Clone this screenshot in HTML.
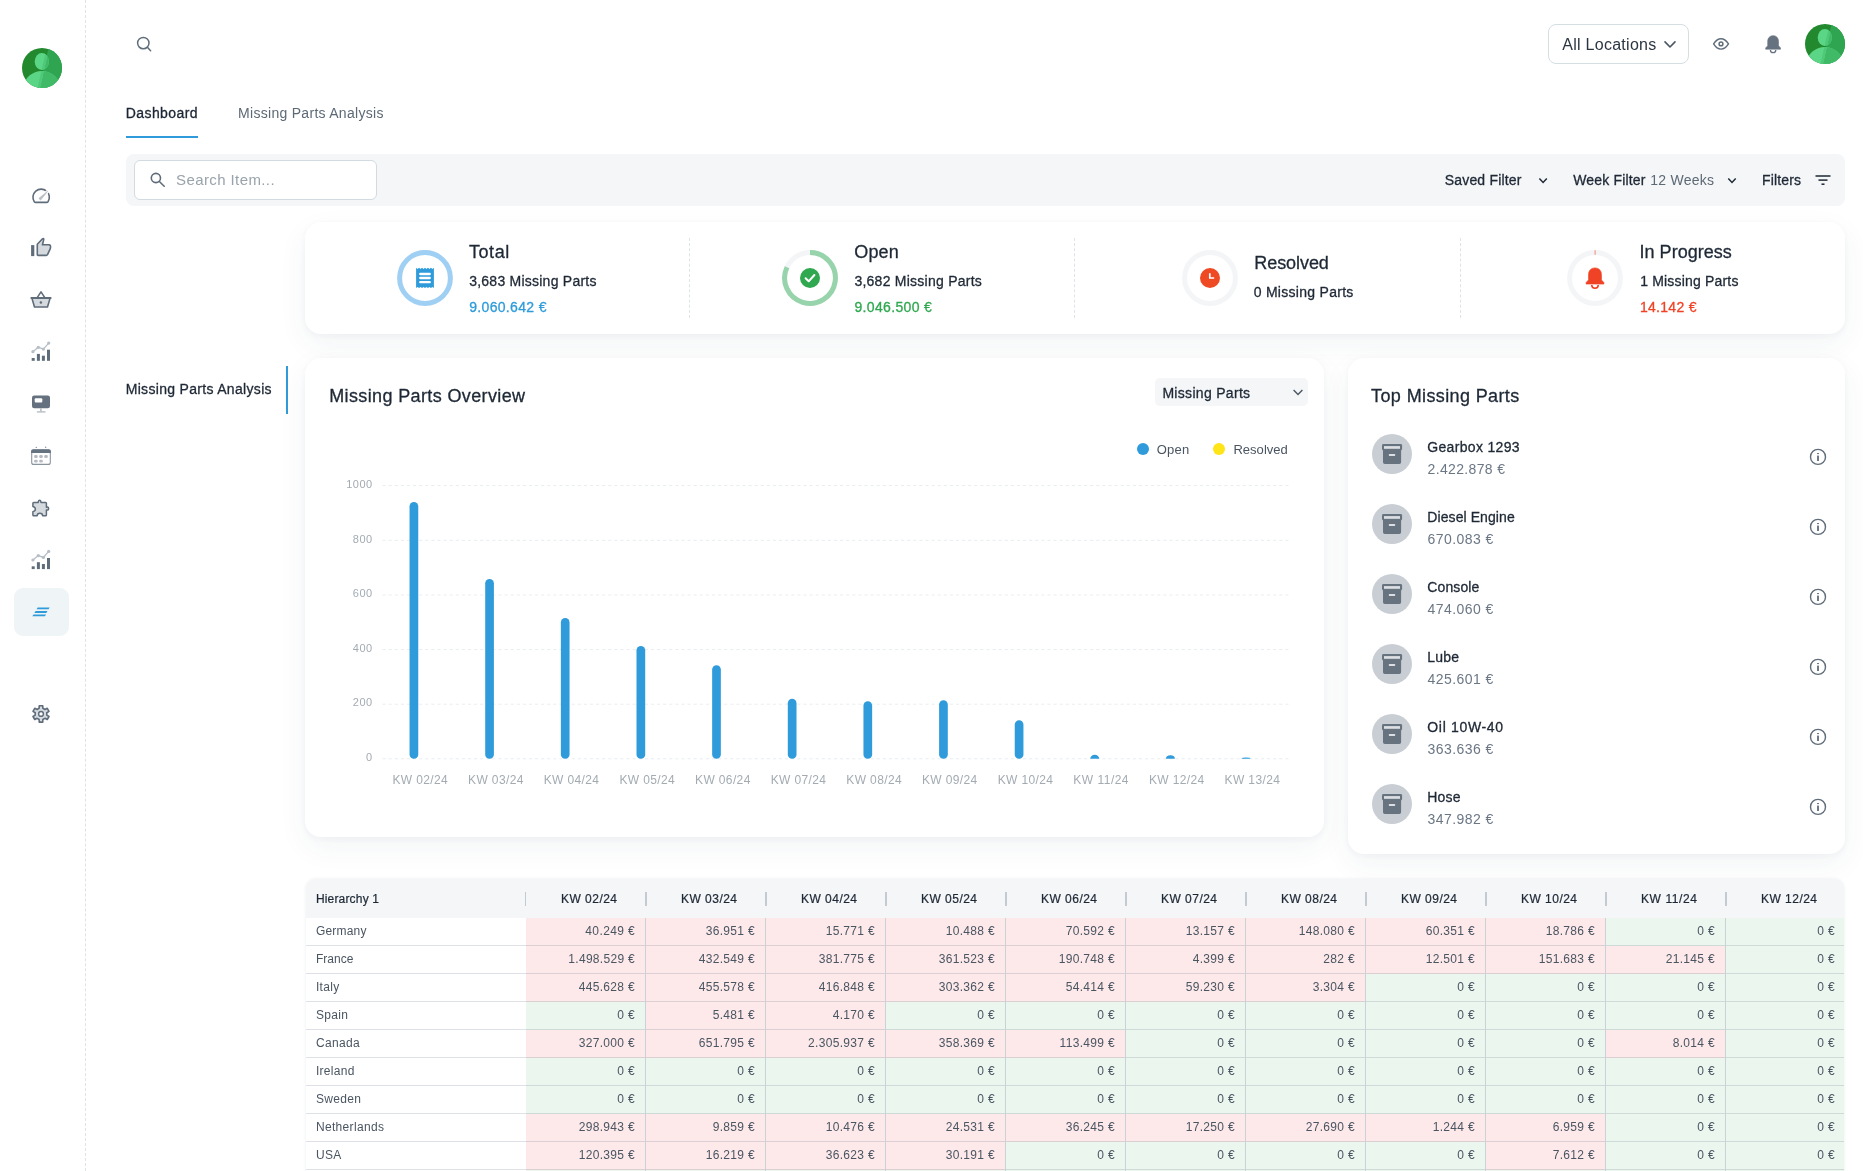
<!DOCTYPE html><html lang="en"><head><meta charset="utf-8"><title>Missing Parts Dashboard</title><style>
*{box-sizing:border-box;margin:0;padding:0}
html,body{width:1863px;height:1171px;overflow:hidden;background:#fff}
body{position:relative;font-family:"Liberation Sans",sans-serif;color:#1e2835;font-size:14px}
.a{position:absolute}
.t{position:absolute;white-space:nowrap;line-height:20px;height:20px}
.sb{-webkit-text-stroke:0.3px currentColor}
.sb2{-webkit-text-stroke:0.22px currentColor}
.card{position:absolute;background:#fff;border-radius:16px;box-shadow:0 2px 6px rgba(40,60,90,0.04),0 10px 30px rgba(40,60,90,0.06)}
#tx{position:absolute;left:0;top:0;width:1863px;height:1171px;will-change:transform}
#ov{position:absolute;left:0;top:0;width:1863px;height:1171px;overflow:hidden}
</style></head><body>
<div class="a" style="left:85px;top:0;width:0;height:1171px;border-left:1px dashed #dce4e8"></div>
<div class="a" style="left:14px;top:588px;width:55px;height:48px;border-radius:9px;background:#eff4f6"></div>
<div class="a" style="left:1548px;top:24px;width:141px;height:40px;border:1px solid #d6dee2;border-radius:8px"></div>
<div class="a" style="left:126px;top:136px;width:72px;height:2px;background:#2f9bdb"></div>
<div class="a" style="left:126px;top:154px;width:1719px;height:52px;border-radius:8px;background:#f4f6f8"></div>
<div class="a" style="left:134px;top:160px;width:243px;height:40px;border:1px solid #d3dbe0;border-radius:6px;background:#fff"></div>
<div class="card" style="left:305px;top:222px;width:1540px;height:112px"></div>
<div class="a" style="left:689px;top:238px;width:0;height:80px;border-left:1px dashed #dde4e8"></div>
<div class="a" style="left:1074px;top:238px;width:0;height:80px;border-left:1px dashed #dde4e8"></div>
<div class="a" style="left:1460px;top:238px;width:0;height:80px;border-left:1px dashed #dde4e8"></div>
<div class="a" style="left:286px;top:366px;width:2px;height:48px;background:#2f9bdb"></div>
<div class="card" style="left:305px;top:357.5px;width:1019px;height:479.5px"></div>
<div class="a" style="left:1155px;top:378px;width:153px;height:28px;border-radius:5px;background:#f4f6f8"></div>
<div class="card" style="left:1348px;top:357.5px;width:497px;height:496.5px"></div>
<div class="a" style="left:306px;top:879px;width:1538px;height:300px;border-radius:9px 9px 0 0;background:#fff;box-shadow:0 0 3px rgba(40,60,90,0.10);overflow:hidden" id="tbl">
<div class="a" style="left:0;top:0;width:1539px;height:38.5px;background:#f4f6f8"></div>
<div class="a" style="left:220px;top:38.6px;width:120px;height:28px;background:#fde9e9"></div>
<div class="a" style="left:340px;top:38.6px;width:120px;height:28px;background:#fde9e9"></div>
<div class="a" style="left:460px;top:38.6px;width:120px;height:28px;background:#fde9e9"></div>
<div class="a" style="left:580px;top:38.6px;width:120px;height:28px;background:#fde9e9"></div>
<div class="a" style="left:700px;top:38.6px;width:120px;height:28px;background:#fde9e9"></div>
<div class="a" style="left:820px;top:38.6px;width:120px;height:28px;background:#fde9e9"></div>
<div class="a" style="left:940px;top:38.6px;width:120px;height:28px;background:#fde9e9"></div>
<div class="a" style="left:1060px;top:38.6px;width:120px;height:28px;background:#fde9e9"></div>
<div class="a" style="left:1180px;top:38.6px;width:120px;height:28px;background:#fde9e9"></div>
<div class="a" style="left:1300px;top:38.6px;width:120px;height:28px;background:#ebf6ef"></div>
<div class="a" style="left:1420px;top:38.6px;width:120px;height:28px;background:#ebf6ef"></div>
<div class="a" style="left:0;top:65.9px;width:1539px;height:1px;background:rgba(60,85,105,0.17)"></div>
<div class="a" style="left:220px;top:66.6px;width:120px;height:28px;background:#fde9e9"></div>
<div class="a" style="left:340px;top:66.6px;width:120px;height:28px;background:#fde9e9"></div>
<div class="a" style="left:460px;top:66.6px;width:120px;height:28px;background:#fde9e9"></div>
<div class="a" style="left:580px;top:66.6px;width:120px;height:28px;background:#fde9e9"></div>
<div class="a" style="left:700px;top:66.6px;width:120px;height:28px;background:#fde9e9"></div>
<div class="a" style="left:820px;top:66.6px;width:120px;height:28px;background:#fde9e9"></div>
<div class="a" style="left:940px;top:66.6px;width:120px;height:28px;background:#fde9e9"></div>
<div class="a" style="left:1060px;top:66.6px;width:120px;height:28px;background:#fde9e9"></div>
<div class="a" style="left:1180px;top:66.6px;width:120px;height:28px;background:#fde9e9"></div>
<div class="a" style="left:1300px;top:66.6px;width:120px;height:28px;background:#fde9e9"></div>
<div class="a" style="left:1420px;top:66.6px;width:120px;height:28px;background:#ebf6ef"></div>
<div class="a" style="left:0;top:93.9px;width:1539px;height:1px;background:rgba(60,85,105,0.17)"></div>
<div class="a" style="left:220px;top:94.6px;width:120px;height:28px;background:#fde9e9"></div>
<div class="a" style="left:340px;top:94.6px;width:120px;height:28px;background:#fde9e9"></div>
<div class="a" style="left:460px;top:94.6px;width:120px;height:28px;background:#fde9e9"></div>
<div class="a" style="left:580px;top:94.6px;width:120px;height:28px;background:#fde9e9"></div>
<div class="a" style="left:700px;top:94.6px;width:120px;height:28px;background:#fde9e9"></div>
<div class="a" style="left:820px;top:94.6px;width:120px;height:28px;background:#fde9e9"></div>
<div class="a" style="left:940px;top:94.6px;width:120px;height:28px;background:#fde9e9"></div>
<div class="a" style="left:1060px;top:94.6px;width:120px;height:28px;background:#ebf6ef"></div>
<div class="a" style="left:1180px;top:94.6px;width:120px;height:28px;background:#ebf6ef"></div>
<div class="a" style="left:1300px;top:94.6px;width:120px;height:28px;background:#ebf6ef"></div>
<div class="a" style="left:1420px;top:94.6px;width:120px;height:28px;background:#ebf6ef"></div>
<div class="a" style="left:0;top:121.9px;width:1539px;height:1px;background:rgba(60,85,105,0.17)"></div>
<div class="a" style="left:220px;top:122.6px;width:120px;height:28px;background:#ebf6ef"></div>
<div class="a" style="left:340px;top:122.6px;width:120px;height:28px;background:#fde9e9"></div>
<div class="a" style="left:460px;top:122.6px;width:120px;height:28px;background:#fde9e9"></div>
<div class="a" style="left:580px;top:122.6px;width:120px;height:28px;background:#ebf6ef"></div>
<div class="a" style="left:700px;top:122.6px;width:120px;height:28px;background:#ebf6ef"></div>
<div class="a" style="left:820px;top:122.6px;width:120px;height:28px;background:#ebf6ef"></div>
<div class="a" style="left:940px;top:122.6px;width:120px;height:28px;background:#ebf6ef"></div>
<div class="a" style="left:1060px;top:122.6px;width:120px;height:28px;background:#ebf6ef"></div>
<div class="a" style="left:1180px;top:122.6px;width:120px;height:28px;background:#ebf6ef"></div>
<div class="a" style="left:1300px;top:122.6px;width:120px;height:28px;background:#ebf6ef"></div>
<div class="a" style="left:1420px;top:122.6px;width:120px;height:28px;background:#ebf6ef"></div>
<div class="a" style="left:0;top:149.9px;width:1539px;height:1px;background:rgba(60,85,105,0.17)"></div>
<div class="a" style="left:220px;top:150.6px;width:120px;height:28px;background:#fde9e9"></div>
<div class="a" style="left:340px;top:150.6px;width:120px;height:28px;background:#fde9e9"></div>
<div class="a" style="left:460px;top:150.6px;width:120px;height:28px;background:#fde9e9"></div>
<div class="a" style="left:580px;top:150.6px;width:120px;height:28px;background:#fde9e9"></div>
<div class="a" style="left:700px;top:150.6px;width:120px;height:28px;background:#fde9e9"></div>
<div class="a" style="left:820px;top:150.6px;width:120px;height:28px;background:#ebf6ef"></div>
<div class="a" style="left:940px;top:150.6px;width:120px;height:28px;background:#ebf6ef"></div>
<div class="a" style="left:1060px;top:150.6px;width:120px;height:28px;background:#ebf6ef"></div>
<div class="a" style="left:1180px;top:150.6px;width:120px;height:28px;background:#ebf6ef"></div>
<div class="a" style="left:1300px;top:150.6px;width:120px;height:28px;background:#fde9e9"></div>
<div class="a" style="left:1420px;top:150.6px;width:120px;height:28px;background:#ebf6ef"></div>
<div class="a" style="left:0;top:177.9px;width:1539px;height:1px;background:rgba(60,85,105,0.17)"></div>
<div class="a" style="left:220px;top:178.6px;width:120px;height:28px;background:#ebf6ef"></div>
<div class="a" style="left:340px;top:178.6px;width:120px;height:28px;background:#ebf6ef"></div>
<div class="a" style="left:460px;top:178.6px;width:120px;height:28px;background:#ebf6ef"></div>
<div class="a" style="left:580px;top:178.6px;width:120px;height:28px;background:#ebf6ef"></div>
<div class="a" style="left:700px;top:178.6px;width:120px;height:28px;background:#ebf6ef"></div>
<div class="a" style="left:820px;top:178.6px;width:120px;height:28px;background:#ebf6ef"></div>
<div class="a" style="left:940px;top:178.6px;width:120px;height:28px;background:#ebf6ef"></div>
<div class="a" style="left:1060px;top:178.6px;width:120px;height:28px;background:#ebf6ef"></div>
<div class="a" style="left:1180px;top:178.6px;width:120px;height:28px;background:#ebf6ef"></div>
<div class="a" style="left:1300px;top:178.6px;width:120px;height:28px;background:#ebf6ef"></div>
<div class="a" style="left:1420px;top:178.6px;width:120px;height:28px;background:#ebf6ef"></div>
<div class="a" style="left:0;top:205.9px;width:1539px;height:1px;background:rgba(60,85,105,0.17)"></div>
<div class="a" style="left:220px;top:206.6px;width:120px;height:28px;background:#ebf6ef"></div>
<div class="a" style="left:340px;top:206.6px;width:120px;height:28px;background:#ebf6ef"></div>
<div class="a" style="left:460px;top:206.6px;width:120px;height:28px;background:#ebf6ef"></div>
<div class="a" style="left:580px;top:206.6px;width:120px;height:28px;background:#ebf6ef"></div>
<div class="a" style="left:700px;top:206.6px;width:120px;height:28px;background:#ebf6ef"></div>
<div class="a" style="left:820px;top:206.6px;width:120px;height:28px;background:#ebf6ef"></div>
<div class="a" style="left:940px;top:206.6px;width:120px;height:28px;background:#ebf6ef"></div>
<div class="a" style="left:1060px;top:206.6px;width:120px;height:28px;background:#ebf6ef"></div>
<div class="a" style="left:1180px;top:206.6px;width:120px;height:28px;background:#ebf6ef"></div>
<div class="a" style="left:1300px;top:206.6px;width:120px;height:28px;background:#ebf6ef"></div>
<div class="a" style="left:1420px;top:206.6px;width:120px;height:28px;background:#ebf6ef"></div>
<div class="a" style="left:0;top:233.9px;width:1539px;height:1px;background:rgba(60,85,105,0.17)"></div>
<div class="a" style="left:220px;top:234.6px;width:120px;height:28px;background:#fde9e9"></div>
<div class="a" style="left:340px;top:234.6px;width:120px;height:28px;background:#fde9e9"></div>
<div class="a" style="left:460px;top:234.6px;width:120px;height:28px;background:#fde9e9"></div>
<div class="a" style="left:580px;top:234.6px;width:120px;height:28px;background:#fde9e9"></div>
<div class="a" style="left:700px;top:234.6px;width:120px;height:28px;background:#fde9e9"></div>
<div class="a" style="left:820px;top:234.6px;width:120px;height:28px;background:#fde9e9"></div>
<div class="a" style="left:940px;top:234.6px;width:120px;height:28px;background:#fde9e9"></div>
<div class="a" style="left:1060px;top:234.6px;width:120px;height:28px;background:#fde9e9"></div>
<div class="a" style="left:1180px;top:234.6px;width:120px;height:28px;background:#fde9e9"></div>
<div class="a" style="left:1300px;top:234.6px;width:120px;height:28px;background:#ebf6ef"></div>
<div class="a" style="left:1420px;top:234.6px;width:120px;height:28px;background:#ebf6ef"></div>
<div class="a" style="left:0;top:261.9px;width:1539px;height:1px;background:rgba(60,85,105,0.17)"></div>
<div class="a" style="left:220px;top:262.6px;width:120px;height:28px;background:#fde9e9"></div>
<div class="a" style="left:340px;top:262.6px;width:120px;height:28px;background:#fde9e9"></div>
<div class="a" style="left:460px;top:262.6px;width:120px;height:28px;background:#fde9e9"></div>
<div class="a" style="left:580px;top:262.6px;width:120px;height:28px;background:#fde9e9"></div>
<div class="a" style="left:700px;top:262.6px;width:120px;height:28px;background:#ebf6ef"></div>
<div class="a" style="left:820px;top:262.6px;width:120px;height:28px;background:#ebf6ef"></div>
<div class="a" style="left:940px;top:262.6px;width:120px;height:28px;background:#ebf6ef"></div>
<div class="a" style="left:1060px;top:262.6px;width:120px;height:28px;background:#ebf6ef"></div>
<div class="a" style="left:1180px;top:262.6px;width:120px;height:28px;background:#fde9e9"></div>
<div class="a" style="left:1300px;top:262.6px;width:120px;height:28px;background:#ebf6ef"></div>
<div class="a" style="left:1420px;top:262.6px;width:120px;height:28px;background:#ebf6ef"></div>
<div class="a" style="left:0;top:289.9px;width:1539px;height:1px;background:rgba(60,85,105,0.17)"></div>
<div class="a" style="left:220px;top:290.6px;width:120px;height:28px;background:#ebf6ef"></div>
<div class="a" style="left:340px;top:290.6px;width:120px;height:28px;background:#ebf6ef"></div>
<div class="a" style="left:460px;top:290.6px;width:120px;height:28px;background:#ebf6ef"></div>
<div class="a" style="left:580px;top:290.6px;width:120px;height:28px;background:#ebf6ef"></div>
<div class="a" style="left:700px;top:290.6px;width:120px;height:28px;background:#ebf6ef"></div>
<div class="a" style="left:820px;top:290.6px;width:120px;height:28px;background:#ebf6ef"></div>
<div class="a" style="left:940px;top:290.6px;width:120px;height:28px;background:#ebf6ef"></div>
<div class="a" style="left:1060px;top:290.6px;width:120px;height:28px;background:#ebf6ef"></div>
<div class="a" style="left:1180px;top:290.6px;width:120px;height:28px;background:#ebf6ef"></div>
<div class="a" style="left:1300px;top:290.6px;width:120px;height:28px;background:#ebf6ef"></div>
<div class="a" style="left:1420px;top:290.6px;width:120px;height:28px;background:#ebf6ef"></div>
<div class="a" style="left:0;top:317.9px;width:1539px;height:1px;background:rgba(60,85,105,0.17)"></div>
<div class="a" style="left:339px;top:38.5px;width:1px;height:300px;background:#cad1d7"></div>
<div class="a" style="left:219px;top:12.5px;width:1px;height:14px;background:#c3cad1"></div>
<div class="a" style="left:459px;top:38.5px;width:1px;height:300px;background:#cad1d7"></div>
<div class="a" style="left:339px;top:12.5px;width:2px;height:14px;background:#c3cad1"></div>
<div class="a" style="left:579px;top:38.5px;width:1px;height:300px;background:#cad1d7"></div>
<div class="a" style="left:459px;top:12.5px;width:2px;height:14px;background:#c3cad1"></div>
<div class="a" style="left:699px;top:38.5px;width:1px;height:300px;background:#cad1d7"></div>
<div class="a" style="left:579px;top:12.5px;width:2px;height:14px;background:#c3cad1"></div>
<div class="a" style="left:819px;top:38.5px;width:1px;height:300px;background:#cad1d7"></div>
<div class="a" style="left:699px;top:12.5px;width:2px;height:14px;background:#c3cad1"></div>
<div class="a" style="left:939px;top:38.5px;width:1px;height:300px;background:#cad1d7"></div>
<div class="a" style="left:819px;top:12.5px;width:2px;height:14px;background:#c3cad1"></div>
<div class="a" style="left:1059px;top:38.5px;width:1px;height:300px;background:#cad1d7"></div>
<div class="a" style="left:939px;top:12.5px;width:2px;height:14px;background:#c3cad1"></div>
<div class="a" style="left:1179px;top:38.5px;width:1px;height:300px;background:#cad1d7"></div>
<div class="a" style="left:1059px;top:12.5px;width:2px;height:14px;background:#c3cad1"></div>
<div class="a" style="left:1299px;top:38.5px;width:1px;height:300px;background:#cad1d7"></div>
<div class="a" style="left:1179px;top:12.5px;width:2px;height:14px;background:#c3cad1"></div>
<div class="a" style="left:1419px;top:38.5px;width:1px;height:300px;background:#cad1d7"></div>
<div class="a" style="left:1299px;top:12.5px;width:2px;height:14px;background:#c3cad1"></div>
<div class="a" style="left:1539px;top:38.5px;width:1px;height:300px;background:#cad1d7"></div>
<div class="a" style="left:1419px;top:12.5px;width:2px;height:14px;background:#c3cad1"></div>
<div class="a" style="left:1539px;top:12.5px;width:2px;height:14px;background:#c3cad1"></div>
</div>
<svg id="ov" width="1863" height="1171" viewBox="0 0 1863 1171"><g transform="translate(22 48)"><clipPath id="av1"><circle cx="20" cy="20" r="20"/></clipPath><clipPath id="av1p"><ellipse cx="19.8" cy="13.6" rx="7.1" ry="8.5"/><path d="M0.5 40 C2.5 29.5 10.5 22.9 19.8 22.9 C29.2 22.9 37 29.5 39.5 40 Z"/></clipPath><g clip-path="url(#av1)"><rect width="40" height="40" fill="#22892f"/><path d="M26.5 0 L40 0 L40 40 L17.5 40 Z" fill="#2fa551"/><g fill="#5bd686"><ellipse cx="19.8" cy="13.6" rx="7.1" ry="8.5"/><path d="M0.5 40 C2.5 29.5 10.5 22.9 19.8 22.9 C29.2 22.9 37 29.5 39.5 40 Z"/></g><g clip-path="url(#av1p)"><path d="M27 0 L40 0 L40 40 L18 40 Z" fill="#41ba68"/><path d="M24.5 0 L27 0 L18 40 L15.5 40 Z" fill="#4fc979"/></g></g></g>
<g transform="translate(1805 24)"><clipPath id="av2"><circle cx="20" cy="20" r="20"/></clipPath><clipPath id="av2p"><ellipse cx="19.8" cy="13.6" rx="7.1" ry="8.5"/><path d="M0.5 40 C2.5 29.5 10.5 22.9 19.8 22.9 C29.2 22.9 37 29.5 39.5 40 Z"/></clipPath><g clip-path="url(#av2)"><rect width="40" height="40" fill="#22892f"/><path d="M26.5 0 L40 0 L40 40 L17.5 40 Z" fill="#2fa551"/><g fill="#5bd686"><ellipse cx="19.8" cy="13.6" rx="7.1" ry="8.5"/><path d="M0.5 40 C2.5 29.5 10.5 22.9 19.8 22.9 C29.2 22.9 37 29.5 39.5 40 Z"/></g><g clip-path="url(#av2p)"><path d="M27 0 L40 0 L40 40 L18 40 Z" fill="#41ba68"/><path d="M24.5 0 L27 0 L18 40 L15.5 40 Z" fill="#4fc979"/></g></g></g>
<path d="M35.6 202.4 H46.7 Q47.5 202.4 48 201.8 A8.2 8.2 0 1 0 34.3 201.8 Q34.8 202.4 35.6 202.4 Z" fill="none" stroke="#5f6c79" stroke-width="1.6" stroke-linejoin="round"/>
<path d="M43 195.7 L49.6 189.6" stroke="#fff" stroke-width="3.3"/>
<path d="M38.9 198.4 L47.6 191.3 L40.6 200 Z" fill="#b7bec5" stroke="#b7bec5" stroke-width="0.8" stroke-linejoin="round"/>
<rect x="31.1" y="245.1" width="3.2" height="11" fill="#5f6c79"/>
<path d="M38.1 255.4 Q37.3 255.4 37.3 254.6 V244.2 L42.5 238.8 Q43.3 238.2 43.8 239.1 L42.5 244.8 H49 Q50.9 245 50.5 247.4 L50.3 248.6 L47.5 254.7 Q47.1 255.4 46.3 255.4 Z" fill="#d5dadf" stroke="#5f6c79" stroke-width="1.6" stroke-linejoin="round"/>
<path d="M31.9 298.1 H50.1 L47.5 307 H34.5 Z" fill="#d5dadf" stroke="#5f6c79" stroke-width="1.6" stroke-linejoin="round"/>
<path d="M31.4 298.05 H50.6" stroke="#5f6c79" stroke-width="2.1" stroke-linecap="round"/>
<path d="M37.2 297.6 L41 291.9 L44.8 297.6" fill="none" stroke="#5f6c79" stroke-width="1.6" stroke-linejoin="round"/>
<circle cx="40.9" cy="302.5" r="1.25" fill="#5f6c79"/>
<rect x="31.7" y="358" width="3" height="2.8000000000000114" fill="#5f6c79"/><rect x="36.9" y="353.9" width="3" height="6.900000000000034" fill="#5f6c79"/><rect x="41.9" y="355.7" width="3" height="5.100000000000023" fill="#5f6c79"/><rect x="47" y="349.7" width="3" height="11.100000000000023" fill="#5f6c79"/><polyline points="32.9,351.7 38.3,347.3 43.4,349.1 48.7,343.1" fill="none" stroke="#b7bec5" stroke-width="1.3"/><circle cx="32.9" cy="351.7" r="1.6" fill="#b7bec5"/><circle cx="38.3" cy="347.3" r="1.6" fill="#b7bec5"/><circle cx="43.4" cy="349.1" r="1.6" fill="#b7bec5"/><circle cx="48.7" cy="343.1" r="1.6" fill="#b7bec5"/>
<rect x="31.7" y="566.3" width="3" height="2.8000000000000114" fill="#5f6c79"/><rect x="36.9" y="562.2" width="3" height="6.900000000000034" fill="#5f6c79"/><rect x="41.9" y="564.0" width="3" height="5.100000000000023" fill="#5f6c79"/><rect x="47" y="558.0" width="3" height="11.100000000000023" fill="#5f6c79"/><polyline points="32.9,560.0 38.3,555.6 43.4,557.4000000000001 48.7,551.4000000000001" fill="none" stroke="#b7bec5" stroke-width="1.3"/><circle cx="32.9" cy="560.0" r="1.6" fill="#b7bec5"/><circle cx="38.3" cy="555.6" r="1.6" fill="#b7bec5"/><circle cx="43.4" cy="557.4000000000001" r="1.6" fill="#b7bec5"/><circle cx="48.7" cy="551.4000000000001" r="1.6" fill="#b7bec5"/>
<rect x="32" y="395.4" width="18" height="12.8" rx="2.2" fill="#65717e"/><rect x="34.7" y="398.3" width="7.6" height="4.3" rx="1" fill="#fff"/><rect x="40.1" y="408.2" width="1.6" height="3.4" fill="#b7bec5"/><rect x="36.9" y="411.2" width="8.6" height="1.4" fill="#b7bec5"/>
<rect x="31.7" y="450" width="18.6" height="14.4" rx="2" fill="#fff" stroke="#8a949e" stroke-width="1.1"/><path d="M31.1 453.1 V451.2 a2 2 0 0 1 2 -2 H48.9 a2 2 0 0 1 2 2 V453.1 Z" fill="#667380"/><path d="M35.2 447.9 L36.8 446.4 V447.9 Z M45 446.3 L46.8 447.8 H45 Z" fill="#7b8691"/>
<rect x="34.1" y="455.1" width="3.6" height="2.8" rx="1.2" fill="#b6bbc1"/>
<rect x="39.2" y="455.1" width="3.6" height="2.8" rx="1.2" fill="#b6bbc1"/>
<rect x="44.2" y="455.1" width="3.6" height="2.8" rx="1.2" fill="#b6bbc1"/>
<rect x="34.1" y="459.70000000000005" width="3.6" height="2.8" rx="1.2" fill="#b6bbc1"/>
<rect x="39.2" y="459.70000000000005" width="3.6" height="2.8" rx="1.2" fill="#b6bbc1"/>
<path d="M33.7 502.4 H38.2 C38.5 501 38.2 500.2 39.6 500.2 C41 500.2 40.7 501 41 502.4 H45.6 Q46.4 502.4 46.4 503.2 V507.2 C47.8 506.9 48.6 507.1 48.6 508.6 C48.6 510.1 47.8 510.3 46.4 510 V514.9 Q46.4 515.7 45.6 515.7 H42.6 C42.6 513.7 41.6 513.2 39.9 513.2 C38.2 513.2 37.2 513.7 37.2 515.7 H33.7 Q32.9 515.7 32.9 514.9 V511.7 C34.6 511.3 35.4 510.4 35.4 509.1 C35.4 507.8 34.6 506.9 32.9 506.5 V503.2 Q32.9 502.4 33.7 502.4 Z" fill="#d5dadf" stroke="#5f6c79" stroke-width="1.5" stroke-linejoin="round"/>
<path d="M37.7 607.5 H49.7 L48.5 609.3 H36.5 Z" fill="#2f9bdb"/>
<path d="M35.6 611.1 H47.5 L46.3 612.9 H34.4 Z" fill="#2f9bdb"/>
<path d="M33.5 614.4 H46.1 L44.9 616.1999999999999 H32.3 Z" fill="#2f9bdb"/>
<path d="M39.12 708.31 L39.25 705.68 L42.75 705.68 L42.88 708.31 L44.90 709.47 L47.24 708.28 L48.99 711.30 L46.78 712.73 L46.78 715.07 L48.99 716.50 L47.24 719.52 L44.90 718.33 L42.88 719.49 L42.75 722.12 L39.25 722.12 L39.12 719.49 L37.10 718.33 L34.76 719.52 L33.01 716.50 L35.22 715.07 L35.22 712.73 L33.01 711.30 L34.76 708.28 L37.10 709.47 Z" fill="#d5dadf" stroke="#5f6c79" stroke-width="1.6" stroke-linejoin="round"/><circle cx="41" cy="713.9" r="2.4" fill="#fff" stroke="#5f6c79" stroke-width="1.4"/>
<circle cx="143.3" cy="43.1" r="5.7" fill="none" stroke="#5f6c79" stroke-width="1.5"/><path d="M147.4 47.3 L150.6 50.7" stroke="#5f6c79" stroke-width="1.5" stroke-linecap="round"/>
<path d="M1665 41.9 L1670 47 L1675 41.9" fill="none" stroke="#4c5763" stroke-width="1.6" stroke-linecap="round" stroke-linejoin="round"/>
<path d="M1713.6 43.9 C1716 40.2 1718.4 38.8 1721 38.8 C1723.6 38.8 1726 40.2 1728.5 43.9 C1726 47.7 1723.6 49.1 1721 49.1 C1718.4 49.1 1716 47.7 1713.6 43.9 Z" fill="none" stroke="#5f6c79" stroke-width="1.4" stroke-linejoin="round"/><circle cx="1721" cy="43.9" r="1.9" fill="none" stroke="#5f6c79" stroke-width="1.5"/>
<path d="M1773.10 35.70 C1776.70 35.70 1778.50 38.30 1778.50 41.30 V45.70 L1780.50 47.90 V49.20 H1765.70 V47.90 L1767.70 45.70 V41.30 C1767.70 38.30 1769.50 35.70 1773.10 35.70 Z" fill="#66727f" stroke="#66727f" stroke-width="0.6" stroke-linejoin="round"/><path d="M1770.40 49.90 A2.70 2.70 0 0 0 1775.80 49.90" fill="none" stroke="#66727f" stroke-width="1.30"/>
<circle cx="155.9" cy="178" r="4.6" fill="none" stroke="#5f6c79" stroke-width="1.6"/><path d="M159.4 181.5 L164.2 186.2" stroke="#5f6c79" stroke-width="1.6" stroke-linecap="round"/>
<path d="M1539.3999999999999 178.6 L1543.1 182.4 L1546.8 178.6" fill="none" stroke="#1e2835" stroke-width="1.5"/>
<path d="M1728.3 178.6 L1732 182.4 L1735.7 178.6" fill="none" stroke="#1e2835" stroke-width="1.5"/>
<rect x="1815.5" y="175.25" width="15" height="1.5" fill="#1e2835"/>
<rect x="1818.5" y="179.35" width="9" height="1.5" fill="#1e2835"/>
<rect x="1821.5" y="183.45" width="3" height="1.5" fill="#1e2835"/>
<circle cx="425" cy="278" r="25.4" fill="none" stroke="#9fd0f4" stroke-width="5"/>
<path d="M416.1 267.8 L417.58 268.9 L419.07 267.8 L420.55 268.9 L422.03 267.8 L423.52 268.9 L425.00 267.8 L426.48 268.9 L427.96 267.8 L429.45 268.9 L430.93 267.8 L432.41 268.9 L433.9 267.8 V288 L432.42 286.9 L430.93 288.0 L429.45 286.9 L427.97 288.0 L426.48 286.9 L425.00 288.0 L423.52 286.9 L422.04 288.0 L420.55 286.9 L419.07 288.0 L417.59 286.9 L416.1 288 Z" fill="#2f9bdb"/>
<rect x="419.1" y="272.85" width="11.8" height="2.3" rx="1.1" fill="#fff"/>
<rect x="419.1" y="276.85" width="11.8" height="2.3" rx="1.1" fill="#fff"/>
<rect x="419.1" y="281.05" width="11.8" height="2.3" rx="1.1" fill="#fff"/>
<circle cx="810" cy="278" r="25.4" fill="none" stroke="#f3f5f7" stroke-width="5"/><path d="M810 252.6 A25.4 25.4 0 1 1 787.02 267.19" fill="none" stroke="#97d3ab" stroke-width="5"/>
<circle cx="810" cy="278" r="10" fill="#2fa84f"/><path d="M805.6 278.2 L808.7 281.3 L814.4 275" fill="none" stroke="#fff" stroke-width="2" stroke-linecap="round" stroke-linejoin="round"/>
<circle cx="1210" cy="278" r="25.4" fill="none" stroke="#f3f5f7" stroke-width="5"/>
<circle cx="1210" cy="278" r="10" fill="#ee4a24"/><path d="M1209.8 273.3 V278 H1214.2" fill="none" stroke="#fff" stroke-width="1.7"/>
<circle cx="1595" cy="278" r="25.4" fill="none" stroke="#f3f5f7" stroke-width="5"/>
<rect x="1594.6" y="250.2" width="1" height="4.6" fill="#f4887a"/>
<path d="M1595.00 267.90 C1599.32 267.90 1601.48 271.02 1601.48 274.62 V279.90 L1603.88 282.54 V284.10 H1586.12 V282.54 L1588.52 279.90 V274.62 C1588.52 271.02 1590.68 267.90 1595.00 267.90 Z" fill="#f04225" stroke="#f04225" stroke-width="0.6" stroke-linejoin="round"/><path d="M1591.76 284.94 A3.24 3.24 0 0 0 1598.24 284.94" fill="none" stroke="#f04225" stroke-width="1.56"/>
<path d="M1293.6 389.9 L1298 394.5 L1302.4 389.9" fill="none" stroke="#4c5763" stroke-width="1.4"/>
<circle cx="1143" cy="449" r="6" fill="#2f9bdb"/><circle cx="1219" cy="449" r="6" fill="#ffe417"/>
<path d="M382.5 485.6 H1291" stroke="#e9edf0" stroke-width="1" stroke-dasharray="3.2 2.9"/>
<path d="M382.5 540.3 H1291" stroke="#e9edf0" stroke-width="1" stroke-dasharray="3.2 2.9"/>
<path d="M382.5 595 H1291" stroke="#e9edf0" stroke-width="1" stroke-dasharray="3.2 2.9"/>
<path d="M382.5 649.6 H1291" stroke="#e9edf0" stroke-width="1" stroke-dasharray="3.2 2.9"/>
<path d="M382.5 704.2 H1291" stroke="#e9edf0" stroke-width="1" stroke-dasharray="3.2 2.9"/>
<path d="M382.5 758.8 H1291" stroke="#e9edf0" stroke-width="1" stroke-dasharray="3.2 2.9"/>
<rect x="409.55" y="501.91" width="8.7" height="256.89" rx="4.35" fill="#2f9bdb"/>
<rect x="485.20" y="578.90" width="8.7" height="179.90" rx="4.35" fill="#2f9bdb"/>
<rect x="560.85" y="618.10" width="8.7" height="140.70" rx="4.35" fill="#2f9bdb"/>
<rect x="636.50" y="645.97" width="8.7" height="112.83" rx="4.35" fill="#2f9bdb"/>
<rect x="712.15" y="665.20" width="8.7" height="93.60" rx="4.35" fill="#2f9bdb"/>
<rect x="787.80" y="698.81" width="8.7" height="59.99" rx="4.35" fill="#2f9bdb"/>
<rect x="863.45" y="701.29" width="8.7" height="57.51" rx="4.35" fill="#2f9bdb"/>
<rect x="939.10" y="700.20" width="8.7" height="58.60" rx="4.35" fill="#2f9bdb"/>
<rect x="1014.75" y="720.28" width="8.7" height="38.52" rx="4.35" fill="#2f9bdb"/>
<path d="M1090.25 758.8 A4.5 4.10 0 0 1 1099.25 758.8 Z" fill="#2f9bdb"/>
<path d="M1165.90 758.8 A4.5 3.55 0 0 1 1174.90 758.8 Z" fill="#2f9bdb"/>
<path d="M1241.55 758.8 A4.5 1.20 0 0 1 1250.55 758.8 Z" fill="#2f9bdb"/>
<circle cx="1392" cy="454" r="20" fill="#c9ced4"/>
<rect x="1382" y="444" width="20.1" height="6.4" rx="1.4" fill="#677480"/><rect x="1384" y="446.1" width="16" height="2.7" fill="#dcdfe3"/><path d="M1383 449.9 H1401.1 V462.2 a1.8 1.8 0 0 1 -1.8 1.8 H1384.8 a1.8 1.8 0 0 1 -1.8 -1.8 Z" fill="#677480"/><rect x="1388.9" y="454" width="6.2" height="2" rx="0.4" fill="#dcdfe3"/>
<circle cx="1818" cy="456.9" r="7.5" fill="none" stroke="#5f6c79" stroke-width="1.4"/><rect x="1817.1" y="455.59999999999997" width="1.8" height="5.4" fill="#5f6c79"/><rect x="1817.1" y="453.0" width="1.8" height="1.1" fill="#5f6c79"/>
<circle cx="1392" cy="524" r="20" fill="#c9ced4"/>
<rect x="1382" y="514" width="20.1" height="6.4" rx="1.4" fill="#677480"/><rect x="1384" y="516.1" width="16" height="2.7" fill="#dcdfe3"/><path d="M1383 519.9 H1401.1 V532.2 a1.8 1.8 0 0 1 -1.8 1.8 H1384.8 a1.8 1.8 0 0 1 -1.8 -1.8 Z" fill="#677480"/><rect x="1388.9" y="524" width="6.2" height="2" rx="0.4" fill="#dcdfe3"/>
<circle cx="1818" cy="526.9" r="7.5" fill="none" stroke="#5f6c79" stroke-width="1.4"/><rect x="1817.1" y="525.6" width="1.8" height="5.4" fill="#5f6c79"/><rect x="1817.1" y="523.0" width="1.8" height="1.1" fill="#5f6c79"/>
<circle cx="1392" cy="594" r="20" fill="#c9ced4"/>
<rect x="1382" y="584" width="20.1" height="6.4" rx="1.4" fill="#677480"/><rect x="1384" y="586.1" width="16" height="2.7" fill="#dcdfe3"/><path d="M1383 589.9 H1401.1 V602.2 a1.8 1.8 0 0 1 -1.8 1.8 H1384.8 a1.8 1.8 0 0 1 -1.8 -1.8 Z" fill="#677480"/><rect x="1388.9" y="594" width="6.2" height="2" rx="0.4" fill="#dcdfe3"/>
<circle cx="1818" cy="596.9" r="7.5" fill="none" stroke="#5f6c79" stroke-width="1.4"/><rect x="1817.1" y="595.6" width="1.8" height="5.4" fill="#5f6c79"/><rect x="1817.1" y="593.0" width="1.8" height="1.1" fill="#5f6c79"/>
<circle cx="1392" cy="664" r="20" fill="#c9ced4"/>
<rect x="1382" y="654" width="20.1" height="6.4" rx="1.4" fill="#677480"/><rect x="1384" y="656.1" width="16" height="2.7" fill="#dcdfe3"/><path d="M1383 659.9 H1401.1 V672.2 a1.8 1.8 0 0 1 -1.8 1.8 H1384.8 a1.8 1.8 0 0 1 -1.8 -1.8 Z" fill="#677480"/><rect x="1388.9" y="664" width="6.2" height="2" rx="0.4" fill="#dcdfe3"/>
<circle cx="1818" cy="666.9" r="7.5" fill="none" stroke="#5f6c79" stroke-width="1.4"/><rect x="1817.1" y="665.6" width="1.8" height="5.4" fill="#5f6c79"/><rect x="1817.1" y="663.0" width="1.8" height="1.1" fill="#5f6c79"/>
<circle cx="1392" cy="734" r="20" fill="#c9ced4"/>
<rect x="1382" y="724" width="20.1" height="6.4" rx="1.4" fill="#677480"/><rect x="1384" y="726.1" width="16" height="2.7" fill="#dcdfe3"/><path d="M1383 729.9 H1401.1 V742.2 a1.8 1.8 0 0 1 -1.8 1.8 H1384.8 a1.8 1.8 0 0 1 -1.8 -1.8 Z" fill="#677480"/><rect x="1388.9" y="734" width="6.2" height="2" rx="0.4" fill="#dcdfe3"/>
<circle cx="1818" cy="736.9" r="7.5" fill="none" stroke="#5f6c79" stroke-width="1.4"/><rect x="1817.1" y="735.6" width="1.8" height="5.4" fill="#5f6c79"/><rect x="1817.1" y="733.0" width="1.8" height="1.1" fill="#5f6c79"/>
<circle cx="1392" cy="804" r="20" fill="#c9ced4"/>
<rect x="1382" y="794" width="20.1" height="6.4" rx="1.4" fill="#677480"/><rect x="1384" y="796.1" width="16" height="2.7" fill="#dcdfe3"/><path d="M1383 799.9 H1401.1 V812.2 a1.8 1.8 0 0 1 -1.8 1.8 H1384.8 a1.8 1.8 0 0 1 -1.8 -1.8 Z" fill="#677480"/><rect x="1388.9" y="804" width="6.2" height="2" rx="0.4" fill="#dcdfe3"/>
<circle cx="1818" cy="806.9" r="7.5" fill="none" stroke="#5f6c79" stroke-width="1.4"/><rect x="1817.1" y="805.6" width="1.8" height="5.4" fill="#5f6c79"/><rect x="1817.1" y="803.0" width="1.8" height="1.1" fill="#5f6c79"/></svg>
<div id="tx">
<div class="t" id="t0" style="top:35.06px;font-size:16px;color:#2b3643;letter-spacing:0.283px;left:1562.20px;">All Locations</div>
<div class="t sb" id="t1" style="top:103.45px;font-size:14px;color:#1b2533;letter-spacing:0.433px;left:125.70px;">Dashboard</div>
<div class="t" id="t2" style="top:103.45px;font-size:14px;color:#5d6975;letter-spacing:0.287px;left:238.10px;">Missing Parts Analysis</div>
<div class="t" id="t3" style="top:170.10px;font-size:15px;color:#99a3ab;letter-spacing:0.402px;left:176.00px;">Search Item...</div>
<div class="t sb" id="t4" style="top:170.15px;font-size:14px;color:#1e2835;letter-spacing:0.191px;left:1444.70px;">Saved Filter</div>
<div class="t sb" id="t5" style="top:170.15px;font-size:14px;color:#1e2835;letter-spacing:0.178px;left:1573.20px;">Week Filter</div>
<div class="t" id="t6" style="top:170.15px;font-size:14px;color:#5d6975;letter-spacing:0.275px;left:1650.20px;">12 Weeks</div>
<div class="t sb" id="t7" style="top:170.15px;font-size:14px;color:#1e2835;letter-spacing:0.139px;left:1762.10px;">Filters</div>
<div class="t sb" id="t8" style="top:242.06px;font-size:18px;color:#1e2835;letter-spacing:0.554px;left:469.00px;">Total</div>
<div class="t sb" id="t9" style="top:271.05px;font-size:14px;color:#1e2835;letter-spacing:0.239px;left:469.20px;">3,683 Missing Parts</div>
<div class="t sb" id="t10" style="top:297.05px;font-size:14px;color:#2f9bdb;letter-spacing:0.330px;left:469.20px;">9.060.642 €</div>
<div class="t sb" id="t11" style="top:241.76px;font-size:18px;color:#1e2835;letter-spacing:0.113px;left:854.30px;">Open</div>
<div class="t sb" id="t12" style="top:270.85px;font-size:14px;color:#1e2835;letter-spacing:0.250px;left:854.40px;">3,682 Missing Parts</div>
<div class="t sb" id="t13" style="top:296.85px;font-size:14px;color:#2fa84f;letter-spacing:0.348px;left:854.40px;">9.046.500 €</div>
<div class="t sb" id="t14" style="top:252.66px;font-size:18px;color:#1e2835;letter-spacing:-0.068px;left:1254.30px;">Resolved</div>
<div class="t sb" id="t15" style="top:281.95px;font-size:14px;color:#1e2835;letter-spacing:0.280px;left:1253.70px;">0 Missing Parts</div>
<div class="t sb" id="t16" style="top:241.76px;font-size:18px;color:#1e2835;letter-spacing:0.005px;left:1639.60px;">In Progress</div>
<div class="t sb" id="t17" style="top:270.85px;font-size:14px;color:#1e2835;letter-spacing:0.180px;left:1640.20px;">1 Missing Parts</div>
<div class="t sb" id="t18" style="top:296.85px;font-size:14px;color:#f04225;letter-spacing:0.300px;left:1639.90px;">14.142 €</div>
<div class="t sb" id="t19" style="top:379.45px;font-size:14px;color:#1e2835;letter-spacing:0.314px;left:125.70px;">Missing Parts Analysis</div>
<div class="t sb" id="t20" style="top:385.96px;font-size:18px;color:#1e2835;letter-spacing:0.371px;left:329.20px;">Missing Parts Overview</div>
<div class="t sb" id="t21" style="top:383.25px;font-size:14px;color:#1e2835;letter-spacing:0.305px;left:1162.40px;">Missing Parts</div>
<div class="t" id="t22" style="top:439.60px;font-size:13px;color:#4a5562;letter-spacing:0.172px;left:1156.80px;">Open</div>
<div class="t" id="t23" style="top:439.60px;font-size:13px;color:#4a5562;letter-spacing:0.037px;left:1233.40px;">Resolved</div>
<div class="t" id="t24" style="top:473.89px;font-size:11px;color:#a3abb2;letter-spacing:0.454px;right:1490.45px;">1000</div>
<div class="t" id="t25" style="top:528.59px;font-size:11px;color:#a3abb2;letter-spacing:0.447px;right:1490.45px;">800</div>
<div class="t" id="t26" style="top:583.29px;font-size:11px;color:#a3abb2;letter-spacing:0.447px;right:1490.45px;">600</div>
<div class="t" id="t27" style="top:637.89px;font-size:11px;color:#a3abb2;letter-spacing:0.447px;right:1490.45px;">400</div>
<div class="t" id="t28" style="top:692.49px;font-size:11px;color:#a3abb2;letter-spacing:0.447px;right:1490.45px;">200</div>
<div class="t" id="t29" style="top:747.09px;font-size:11px;color:#a3abb2;letter-spacing:0.775px;right:1490.12px;">0</div>
<div class="t" id="t30" style="top:770.14px;font-size:12px;color:#a3abb2;letter-spacing:0.375px;left:270.29px;width:300px;text-align:center;">KW 02/24</div>
<div class="t" id="t31" style="top:770.14px;font-size:12px;color:#a3abb2;letter-spacing:0.375px;left:345.94px;width:300px;text-align:center;">KW 03/24</div>
<div class="t" id="t32" style="top:770.14px;font-size:12px;color:#a3abb2;letter-spacing:0.375px;left:421.59px;width:300px;text-align:center;">KW 04/24</div>
<div class="t" id="t33" style="top:770.14px;font-size:12px;color:#a3abb2;letter-spacing:0.375px;left:497.24px;width:300px;text-align:center;">KW 05/24</div>
<div class="t" id="t34" style="top:770.14px;font-size:12px;color:#a3abb2;letter-spacing:0.375px;left:572.89px;width:300px;text-align:center;">KW 06/24</div>
<div class="t" id="t35" style="top:770.14px;font-size:12px;color:#a3abb2;letter-spacing:0.375px;left:648.54px;width:300px;text-align:center;">KW 07/24</div>
<div class="t" id="t36" style="top:770.14px;font-size:12px;color:#a3abb2;letter-spacing:0.375px;left:724.19px;width:300px;text-align:center;">KW 08/24</div>
<div class="t" id="t37" style="top:770.14px;font-size:12px;color:#a3abb2;letter-spacing:0.375px;left:799.84px;width:300px;text-align:center;">KW 09/24</div>
<div class="t" id="t38" style="top:770.14px;font-size:12px;color:#a3abb2;letter-spacing:0.375px;left:875.49px;width:300px;text-align:center;">KW 10/24</div>
<div class="t" id="t39" style="top:770.14px;font-size:12px;color:#a3abb2;letter-spacing:0.486px;left:951.19px;width:300px;text-align:center;">KW 11/24</div>
<div class="t" id="t40" style="top:770.14px;font-size:12px;color:#a3abb2;letter-spacing:0.375px;left:1026.79px;width:300px;text-align:center;">KW 12/24</div>
<div class="t" id="t41" style="top:770.14px;font-size:12px;color:#a3abb2;letter-spacing:0.375px;left:1102.44px;width:300px;text-align:center;">KW 13/24</div>
<div class="t sb" id="t42" style="top:386.16px;font-size:18px;color:#1e2835;letter-spacing:0.379px;left:1371.10px;">Top Missing Parts</div>
<div class="t sb" id="t43" style="top:437.05px;font-size:14px;color:#1e2835;letter-spacing:0.322px;left:1427.30px;">Gearbox 1293</div>
<div class="t" id="t44" style="top:459.05px;font-size:14px;color:#6b7785;letter-spacing:0.339px;left:1427.60px;">2.422.878 €</div>
<div class="t sb" id="t45" style="top:507.05px;font-size:14px;color:#1e2835;letter-spacing:0.085px;left:1427.30px;">Diesel Engine</div>
<div class="t" id="t46" style="top:529.05px;font-size:14px;color:#6b7785;letter-spacing:0.434px;left:1427.60px;">670.083 €</div>
<div class="t sb" id="t47" style="top:577.05px;font-size:14px;color:#1e2835;letter-spacing:0.104px;left:1427.30px;">Console</div>
<div class="t" id="t48" style="top:599.05px;font-size:14px;color:#6b7785;letter-spacing:0.434px;left:1427.60px;">474.060 €</div>
<div class="t sb" id="t49" style="top:647.05px;font-size:14px;color:#1e2835;letter-spacing:0.236px;left:1427.30px;">Lube</div>
<div class="t" id="t50" style="top:669.05px;font-size:14px;color:#6b7785;letter-spacing:0.434px;left:1427.60px;">425.601 €</div>
<div class="t sb" id="t51" style="top:717.05px;font-size:14px;color:#1e2835;letter-spacing:0.672px;left:1427.30px;">Oil 10W-40</div>
<div class="t" id="t52" style="top:739.05px;font-size:14px;color:#6b7785;letter-spacing:0.434px;left:1427.60px;">363.636 €</div>
<div class="t sb" id="t53" style="top:787.05px;font-size:14px;color:#1e2835;letter-spacing:0.178px;left:1427.30px;">Hose</div>
<div class="t" id="t54" style="top:809.05px;font-size:14px;color:#6b7785;letter-spacing:0.434px;left:1427.60px;">347.982 €</div>
<div class="t" id="t55" style="top:920.94px;font-size:12px;color:#4a5562;letter-spacing:0.385px;right:1227.91px;">40.249 €</div>
<div class="t" id="t56" style="top:920.94px;font-size:12px;color:#4a5562;letter-spacing:0.326px;right:1107.97px;">36.951 €</div>
<div class="t" id="t57" style="top:920.94px;font-size:12px;color:#4a5562;letter-spacing:0.326px;right:987.97px;">15.771 €</div>
<div class="t" id="t58" style="top:920.94px;font-size:12px;color:#4a5562;letter-spacing:0.326px;right:867.97px;">10.488 €</div>
<div class="t" id="t59" style="top:920.94px;font-size:12px;color:#4a5562;letter-spacing:0.326px;right:747.97px;">70.592 €</div>
<div class="t" id="t60" style="top:920.94px;font-size:12px;color:#4a5562;letter-spacing:0.326px;right:627.97px;">13.157 €</div>
<div class="t" id="t61" style="top:920.94px;font-size:12px;color:#4a5562;letter-spacing:0.326px;right:507.97px;">148.080 €</div>
<div class="t" id="t62" style="top:920.94px;font-size:12px;color:#4a5562;letter-spacing:0.326px;right:387.97px;">60.351 €</div>
<div class="t" id="t63" style="top:920.94px;font-size:12px;color:#4a5562;letter-spacing:0.326px;right:267.97px;">18.786 €</div>
<div class="t" id="t64" style="top:920.94px;font-size:12px;color:#4a5562;letter-spacing:0.326px;right:147.97px;">0 €</div>
<div class="t" id="t65" style="top:920.94px;font-size:12px;color:#4a5562;letter-spacing:0.326px;right:27.97px;">0 €</div>
<div class="t" id="t66" style="top:920.94px;font-size:12px;color:#4a5562;letter-spacing:0.192px;left:315.90px;">Germany</div>
<div class="t" id="t67" style="top:948.94px;font-size:12px;color:#4a5562;letter-spacing:0.299px;right:1228.00px;">1.498.529 €</div>
<div class="t" id="t68" style="top:948.94px;font-size:12px;color:#4a5562;letter-spacing:0.326px;right:1107.97px;">432.549 €</div>
<div class="t" id="t69" style="top:948.94px;font-size:12px;color:#4a5562;letter-spacing:0.326px;right:987.97px;">381.775 €</div>
<div class="t" id="t70" style="top:948.94px;font-size:12px;color:#4a5562;letter-spacing:0.326px;right:867.97px;">361.523 €</div>
<div class="t" id="t71" style="top:948.94px;font-size:12px;color:#4a5562;letter-spacing:0.326px;right:747.97px;">190.748 €</div>
<div class="t" id="t72" style="top:948.94px;font-size:12px;color:#4a5562;letter-spacing:0.326px;right:627.97px;">4.399 €</div>
<div class="t" id="t73" style="top:948.94px;font-size:12px;color:#4a5562;letter-spacing:0.326px;right:507.97px;">282 €</div>
<div class="t" id="t74" style="top:948.94px;font-size:12px;color:#4a5562;letter-spacing:0.326px;right:387.97px;">12.501 €</div>
<div class="t" id="t75" style="top:948.94px;font-size:12px;color:#4a5562;letter-spacing:0.326px;right:267.97px;">151.683 €</div>
<div class="t" id="t76" style="top:948.94px;font-size:12px;color:#4a5562;letter-spacing:0.326px;right:147.97px;">21.145 €</div>
<div class="t" id="t77" style="top:948.94px;font-size:12px;color:#4a5562;letter-spacing:0.326px;right:27.97px;">0 €</div>
<div class="t" id="t78" style="top:948.94px;font-size:12px;color:#4a5562;letter-spacing:0.057px;left:315.90px;">France</div>
<div class="t" id="t79" style="top:976.94px;font-size:12px;color:#4a5562;letter-spacing:0.326px;right:1227.97px;">445.628 €</div>
<div class="t" id="t80" style="top:976.94px;font-size:12px;color:#4a5562;letter-spacing:0.326px;right:1107.97px;">455.578 €</div>
<div class="t" id="t81" style="top:976.94px;font-size:12px;color:#4a5562;letter-spacing:0.326px;right:987.97px;">416.848 €</div>
<div class="t" id="t82" style="top:976.94px;font-size:12px;color:#4a5562;letter-spacing:0.326px;right:867.97px;">303.362 €</div>
<div class="t" id="t83" style="top:976.94px;font-size:12px;color:#4a5562;letter-spacing:0.326px;right:747.97px;">54.414 €</div>
<div class="t" id="t84" style="top:976.94px;font-size:12px;color:#4a5562;letter-spacing:0.326px;right:627.97px;">59.230 €</div>
<div class="t" id="t85" style="top:976.94px;font-size:12px;color:#4a5562;letter-spacing:0.326px;right:507.97px;">3.304 €</div>
<div class="t" id="t86" style="top:976.94px;font-size:12px;color:#4a5562;letter-spacing:0.326px;right:387.97px;">0 €</div>
<div class="t" id="t87" style="top:976.94px;font-size:12px;color:#4a5562;letter-spacing:0.326px;right:267.97px;">0 €</div>
<div class="t" id="t88" style="top:976.94px;font-size:12px;color:#4a5562;letter-spacing:0.326px;right:147.97px;">0 €</div>
<div class="t" id="t89" style="top:976.94px;font-size:12px;color:#4a5562;letter-spacing:0.326px;right:27.97px;">0 €</div>
<div class="t" id="t90" style="top:976.94px;font-size:12px;color:#4a5562;letter-spacing:0.357px;left:315.90px;">Italy</div>
<div class="t" id="t91" style="top:1004.94px;font-size:12px;color:#4a5562;letter-spacing:0.326px;right:1227.97px;">0 €</div>
<div class="t" id="t92" style="top:1004.94px;font-size:12px;color:#4a5562;letter-spacing:0.326px;right:1107.97px;">5.481 €</div>
<div class="t" id="t93" style="top:1004.94px;font-size:12px;color:#4a5562;letter-spacing:0.326px;right:987.97px;">4.170 €</div>
<div class="t" id="t94" style="top:1004.94px;font-size:12px;color:#4a5562;letter-spacing:0.326px;right:867.97px;">0 €</div>
<div class="t" id="t95" style="top:1004.94px;font-size:12px;color:#4a5562;letter-spacing:0.326px;right:747.97px;">0 €</div>
<div class="t" id="t96" style="top:1004.94px;font-size:12px;color:#4a5562;letter-spacing:0.326px;right:627.97px;">0 €</div>
<div class="t" id="t97" style="top:1004.94px;font-size:12px;color:#4a5562;letter-spacing:0.326px;right:507.97px;">0 €</div>
<div class="t" id="t98" style="top:1004.94px;font-size:12px;color:#4a5562;letter-spacing:0.326px;right:387.97px;">0 €</div>
<div class="t" id="t99" style="top:1004.94px;font-size:12px;color:#4a5562;letter-spacing:0.326px;right:267.97px;">0 €</div>
<div class="t" id="t100" style="top:1004.94px;font-size:12px;color:#4a5562;letter-spacing:0.326px;right:147.97px;">0 €</div>
<div class="t" id="t101" style="top:1004.94px;font-size:12px;color:#4a5562;letter-spacing:0.326px;right:27.97px;">0 €</div>
<div class="t" id="t102" style="top:1004.94px;font-size:12px;color:#4a5562;letter-spacing:0.326px;left:315.90px;">Spain</div>
<div class="t" id="t103" style="top:1032.94px;font-size:12px;color:#4a5562;letter-spacing:0.326px;right:1227.97px;">327.000 €</div>
<div class="t" id="t104" style="top:1032.94px;font-size:12px;color:#4a5562;letter-spacing:0.326px;right:1107.97px;">651.795 €</div>
<div class="t" id="t105" style="top:1032.94px;font-size:12px;color:#4a5562;letter-spacing:0.326px;right:987.97px;">2.305.937 €</div>
<div class="t" id="t106" style="top:1032.94px;font-size:12px;color:#4a5562;letter-spacing:0.326px;right:867.97px;">358.369 €</div>
<div class="t" id="t107" style="top:1032.94px;font-size:12px;color:#4a5562;letter-spacing:0.326px;right:747.97px;">113.499 €</div>
<div class="t" id="t108" style="top:1032.94px;font-size:12px;color:#4a5562;letter-spacing:0.326px;right:627.97px;">0 €</div>
<div class="t" id="t109" style="top:1032.94px;font-size:12px;color:#4a5562;letter-spacing:0.326px;right:507.97px;">0 €</div>
<div class="t" id="t110" style="top:1032.94px;font-size:12px;color:#4a5562;letter-spacing:0.326px;right:387.97px;">0 €</div>
<div class="t" id="t111" style="top:1032.94px;font-size:12px;color:#4a5562;letter-spacing:0.326px;right:267.97px;">0 €</div>
<div class="t" id="t112" style="top:1032.94px;font-size:12px;color:#4a5562;letter-spacing:0.326px;right:147.97px;">8.014 €</div>
<div class="t" id="t113" style="top:1032.94px;font-size:12px;color:#4a5562;letter-spacing:0.326px;right:27.97px;">0 €</div>
<div class="t" id="t114" style="top:1032.94px;font-size:12px;color:#4a5562;letter-spacing:0.326px;left:315.90px;">Canada</div>
<div class="t" id="t115" style="top:1060.94px;font-size:12px;color:#4a5562;letter-spacing:0.326px;right:1227.97px;">0 €</div>
<div class="t" id="t116" style="top:1060.94px;font-size:12px;color:#4a5562;letter-spacing:0.326px;right:1107.97px;">0 €</div>
<div class="t" id="t117" style="top:1060.94px;font-size:12px;color:#4a5562;letter-spacing:0.326px;right:987.97px;">0 €</div>
<div class="t" id="t118" style="top:1060.94px;font-size:12px;color:#4a5562;letter-spacing:0.326px;right:867.97px;">0 €</div>
<div class="t" id="t119" style="top:1060.94px;font-size:12px;color:#4a5562;letter-spacing:0.326px;right:747.97px;">0 €</div>
<div class="t" id="t120" style="top:1060.94px;font-size:12px;color:#4a5562;letter-spacing:0.326px;right:627.97px;">0 €</div>
<div class="t" id="t121" style="top:1060.94px;font-size:12px;color:#4a5562;letter-spacing:0.326px;right:507.97px;">0 €</div>
<div class="t" id="t122" style="top:1060.94px;font-size:12px;color:#4a5562;letter-spacing:0.326px;right:387.97px;">0 €</div>
<div class="t" id="t123" style="top:1060.94px;font-size:12px;color:#4a5562;letter-spacing:0.326px;right:267.97px;">0 €</div>
<div class="t" id="t124" style="top:1060.94px;font-size:12px;color:#4a5562;letter-spacing:0.326px;right:147.97px;">0 €</div>
<div class="t" id="t125" style="top:1060.94px;font-size:12px;color:#4a5562;letter-spacing:0.326px;right:27.97px;">0 €</div>
<div class="t" id="t126" style="top:1060.94px;font-size:12px;color:#4a5562;letter-spacing:0.326px;left:315.90px;">Ireland</div>
<div class="t" id="t127" style="top:1088.94px;font-size:12px;color:#4a5562;letter-spacing:0.326px;right:1227.97px;">0 €</div>
<div class="t" id="t128" style="top:1088.94px;font-size:12px;color:#4a5562;letter-spacing:0.326px;right:1107.97px;">0 €</div>
<div class="t" id="t129" style="top:1088.94px;font-size:12px;color:#4a5562;letter-spacing:0.326px;right:987.97px;">0 €</div>
<div class="t" id="t130" style="top:1088.94px;font-size:12px;color:#4a5562;letter-spacing:0.326px;right:867.97px;">0 €</div>
<div class="t" id="t131" style="top:1088.94px;font-size:12px;color:#4a5562;letter-spacing:0.326px;right:747.97px;">0 €</div>
<div class="t" id="t132" style="top:1088.94px;font-size:12px;color:#4a5562;letter-spacing:0.326px;right:627.97px;">0 €</div>
<div class="t" id="t133" style="top:1088.94px;font-size:12px;color:#4a5562;letter-spacing:0.326px;right:507.97px;">0 €</div>
<div class="t" id="t134" style="top:1088.94px;font-size:12px;color:#4a5562;letter-spacing:0.326px;right:387.97px;">0 €</div>
<div class="t" id="t135" style="top:1088.94px;font-size:12px;color:#4a5562;letter-spacing:0.326px;right:267.97px;">0 €</div>
<div class="t" id="t136" style="top:1088.94px;font-size:12px;color:#4a5562;letter-spacing:0.326px;right:147.97px;">0 €</div>
<div class="t" id="t137" style="top:1088.94px;font-size:12px;color:#4a5562;letter-spacing:0.326px;right:27.97px;">0 €</div>
<div class="t" id="t138" style="top:1088.94px;font-size:12px;color:#4a5562;letter-spacing:0.326px;left:315.90px;">Sweden</div>
<div class="t" id="t139" style="top:1116.94px;font-size:12px;color:#4a5562;letter-spacing:0.326px;right:1227.97px;">298.943 €</div>
<div class="t" id="t140" style="top:1116.94px;font-size:12px;color:#4a5562;letter-spacing:0.326px;right:1107.97px;">9.859 €</div>
<div class="t" id="t141" style="top:1116.94px;font-size:12px;color:#4a5562;letter-spacing:0.326px;right:987.97px;">10.476 €</div>
<div class="t" id="t142" style="top:1116.94px;font-size:12px;color:#4a5562;letter-spacing:0.326px;right:867.97px;">24.531 €</div>
<div class="t" id="t143" style="top:1116.94px;font-size:12px;color:#4a5562;letter-spacing:0.326px;right:747.97px;">36.245 €</div>
<div class="t" id="t144" style="top:1116.94px;font-size:12px;color:#4a5562;letter-spacing:0.326px;right:627.97px;">17.250 €</div>
<div class="t" id="t145" style="top:1116.94px;font-size:12px;color:#4a5562;letter-spacing:0.326px;right:507.97px;">27.690 €</div>
<div class="t" id="t146" style="top:1116.94px;font-size:12px;color:#4a5562;letter-spacing:0.326px;right:387.97px;">1.244 €</div>
<div class="t" id="t147" style="top:1116.94px;font-size:12px;color:#4a5562;letter-spacing:0.326px;right:267.97px;">6.959 €</div>
<div class="t" id="t148" style="top:1116.94px;font-size:12px;color:#4a5562;letter-spacing:0.326px;right:147.97px;">0 €</div>
<div class="t" id="t149" style="top:1116.94px;font-size:12px;color:#4a5562;letter-spacing:0.326px;right:27.97px;">0 €</div>
<div class="t" id="t150" style="top:1116.94px;font-size:12px;color:#4a5562;letter-spacing:0.335px;left:315.90px;">Netherlands</div>
<div class="t" id="t151" style="top:1144.94px;font-size:12px;color:#4a5562;letter-spacing:0.326px;right:1227.97px;">120.395 €</div>
<div class="t" id="t152" style="top:1144.94px;font-size:12px;color:#4a5562;letter-spacing:0.326px;right:1107.97px;">16.219 €</div>
<div class="t" id="t153" style="top:1144.94px;font-size:12px;color:#4a5562;letter-spacing:0.326px;right:987.97px;">36.623 €</div>
<div class="t" id="t154" style="top:1144.94px;font-size:12px;color:#4a5562;letter-spacing:0.326px;right:867.97px;">30.191 €</div>
<div class="t" id="t155" style="top:1144.94px;font-size:12px;color:#4a5562;letter-spacing:0.326px;right:747.97px;">0 €</div>
<div class="t" id="t156" style="top:1144.94px;font-size:12px;color:#4a5562;letter-spacing:0.326px;right:627.97px;">0 €</div>
<div class="t" id="t157" style="top:1144.94px;font-size:12px;color:#4a5562;letter-spacing:0.326px;right:507.97px;">0 €</div>
<div class="t" id="t158" style="top:1144.94px;font-size:12px;color:#4a5562;letter-spacing:0.326px;right:387.97px;">0 €</div>
<div class="t" id="t159" style="top:1144.94px;font-size:12px;color:#4a5562;letter-spacing:0.326px;right:267.97px;">7.612 €</div>
<div class="t" id="t160" style="top:1144.94px;font-size:12px;color:#4a5562;letter-spacing:0.326px;right:147.97px;">0 €</div>
<div class="t" id="t161" style="top:1144.94px;font-size:12px;color:#4a5562;letter-spacing:0.326px;right:27.97px;">0 €</div>
<div class="t" id="t162" style="top:1144.94px;font-size:12px;color:#4a5562;letter-spacing:0.326px;left:315.90px;">USA</div>
<div class="t sb2" id="t163" style="top:889.04px;font-size:12px;color:#1e2835;letter-spacing:0.487px;left:439.24px;width:300px;text-align:center;">KW 02/24</div>
<div class="t sb2" id="t164" style="top:889.04px;font-size:12px;color:#1e2835;letter-spacing:0.487px;left:559.24px;width:300px;text-align:center;">KW 03/24</div>
<div class="t sb2" id="t165" style="top:889.04px;font-size:12px;color:#1e2835;letter-spacing:0.487px;left:679.24px;width:300px;text-align:center;">KW 04/24</div>
<div class="t sb2" id="t166" style="top:889.04px;font-size:12px;color:#1e2835;letter-spacing:0.487px;left:799.24px;width:300px;text-align:center;">KW 05/24</div>
<div class="t sb2" id="t167" style="top:889.04px;font-size:12px;color:#1e2835;letter-spacing:0.487px;left:919.24px;width:300px;text-align:center;">KW 06/24</div>
<div class="t sb2" id="t168" style="top:889.04px;font-size:12px;color:#1e2835;letter-spacing:0.487px;left:1039.24px;width:300px;text-align:center;">KW 07/24</div>
<div class="t sb2" id="t169" style="top:889.04px;font-size:12px;color:#1e2835;letter-spacing:0.487px;left:1159.24px;width:300px;text-align:center;">KW 08/24</div>
<div class="t sb2" id="t170" style="top:889.04px;font-size:12px;color:#1e2835;letter-spacing:0.487px;left:1279.24px;width:300px;text-align:center;">KW 09/24</div>
<div class="t sb2" id="t171" style="top:889.04px;font-size:12px;color:#1e2835;letter-spacing:0.487px;left:1399.24px;width:300px;text-align:center;">KW 10/24</div>
<div class="t sb2" id="t172" style="top:889.04px;font-size:12px;color:#1e2835;letter-spacing:0.598px;left:1519.30px;width:300px;text-align:center;">KW 11/24</div>
<div class="t sb2" id="t173" style="top:889.04px;font-size:12px;color:#1e2835;letter-spacing:0.487px;left:1639.24px;width:300px;text-align:center;">KW 12/24</div>
<div class="t sb2" id="t174" style="top:889.04px;font-size:12px;color:#1e2835;letter-spacing:0.176px;left:315.90px;">Hierarchy 1</div>
</div>
</body></html>
